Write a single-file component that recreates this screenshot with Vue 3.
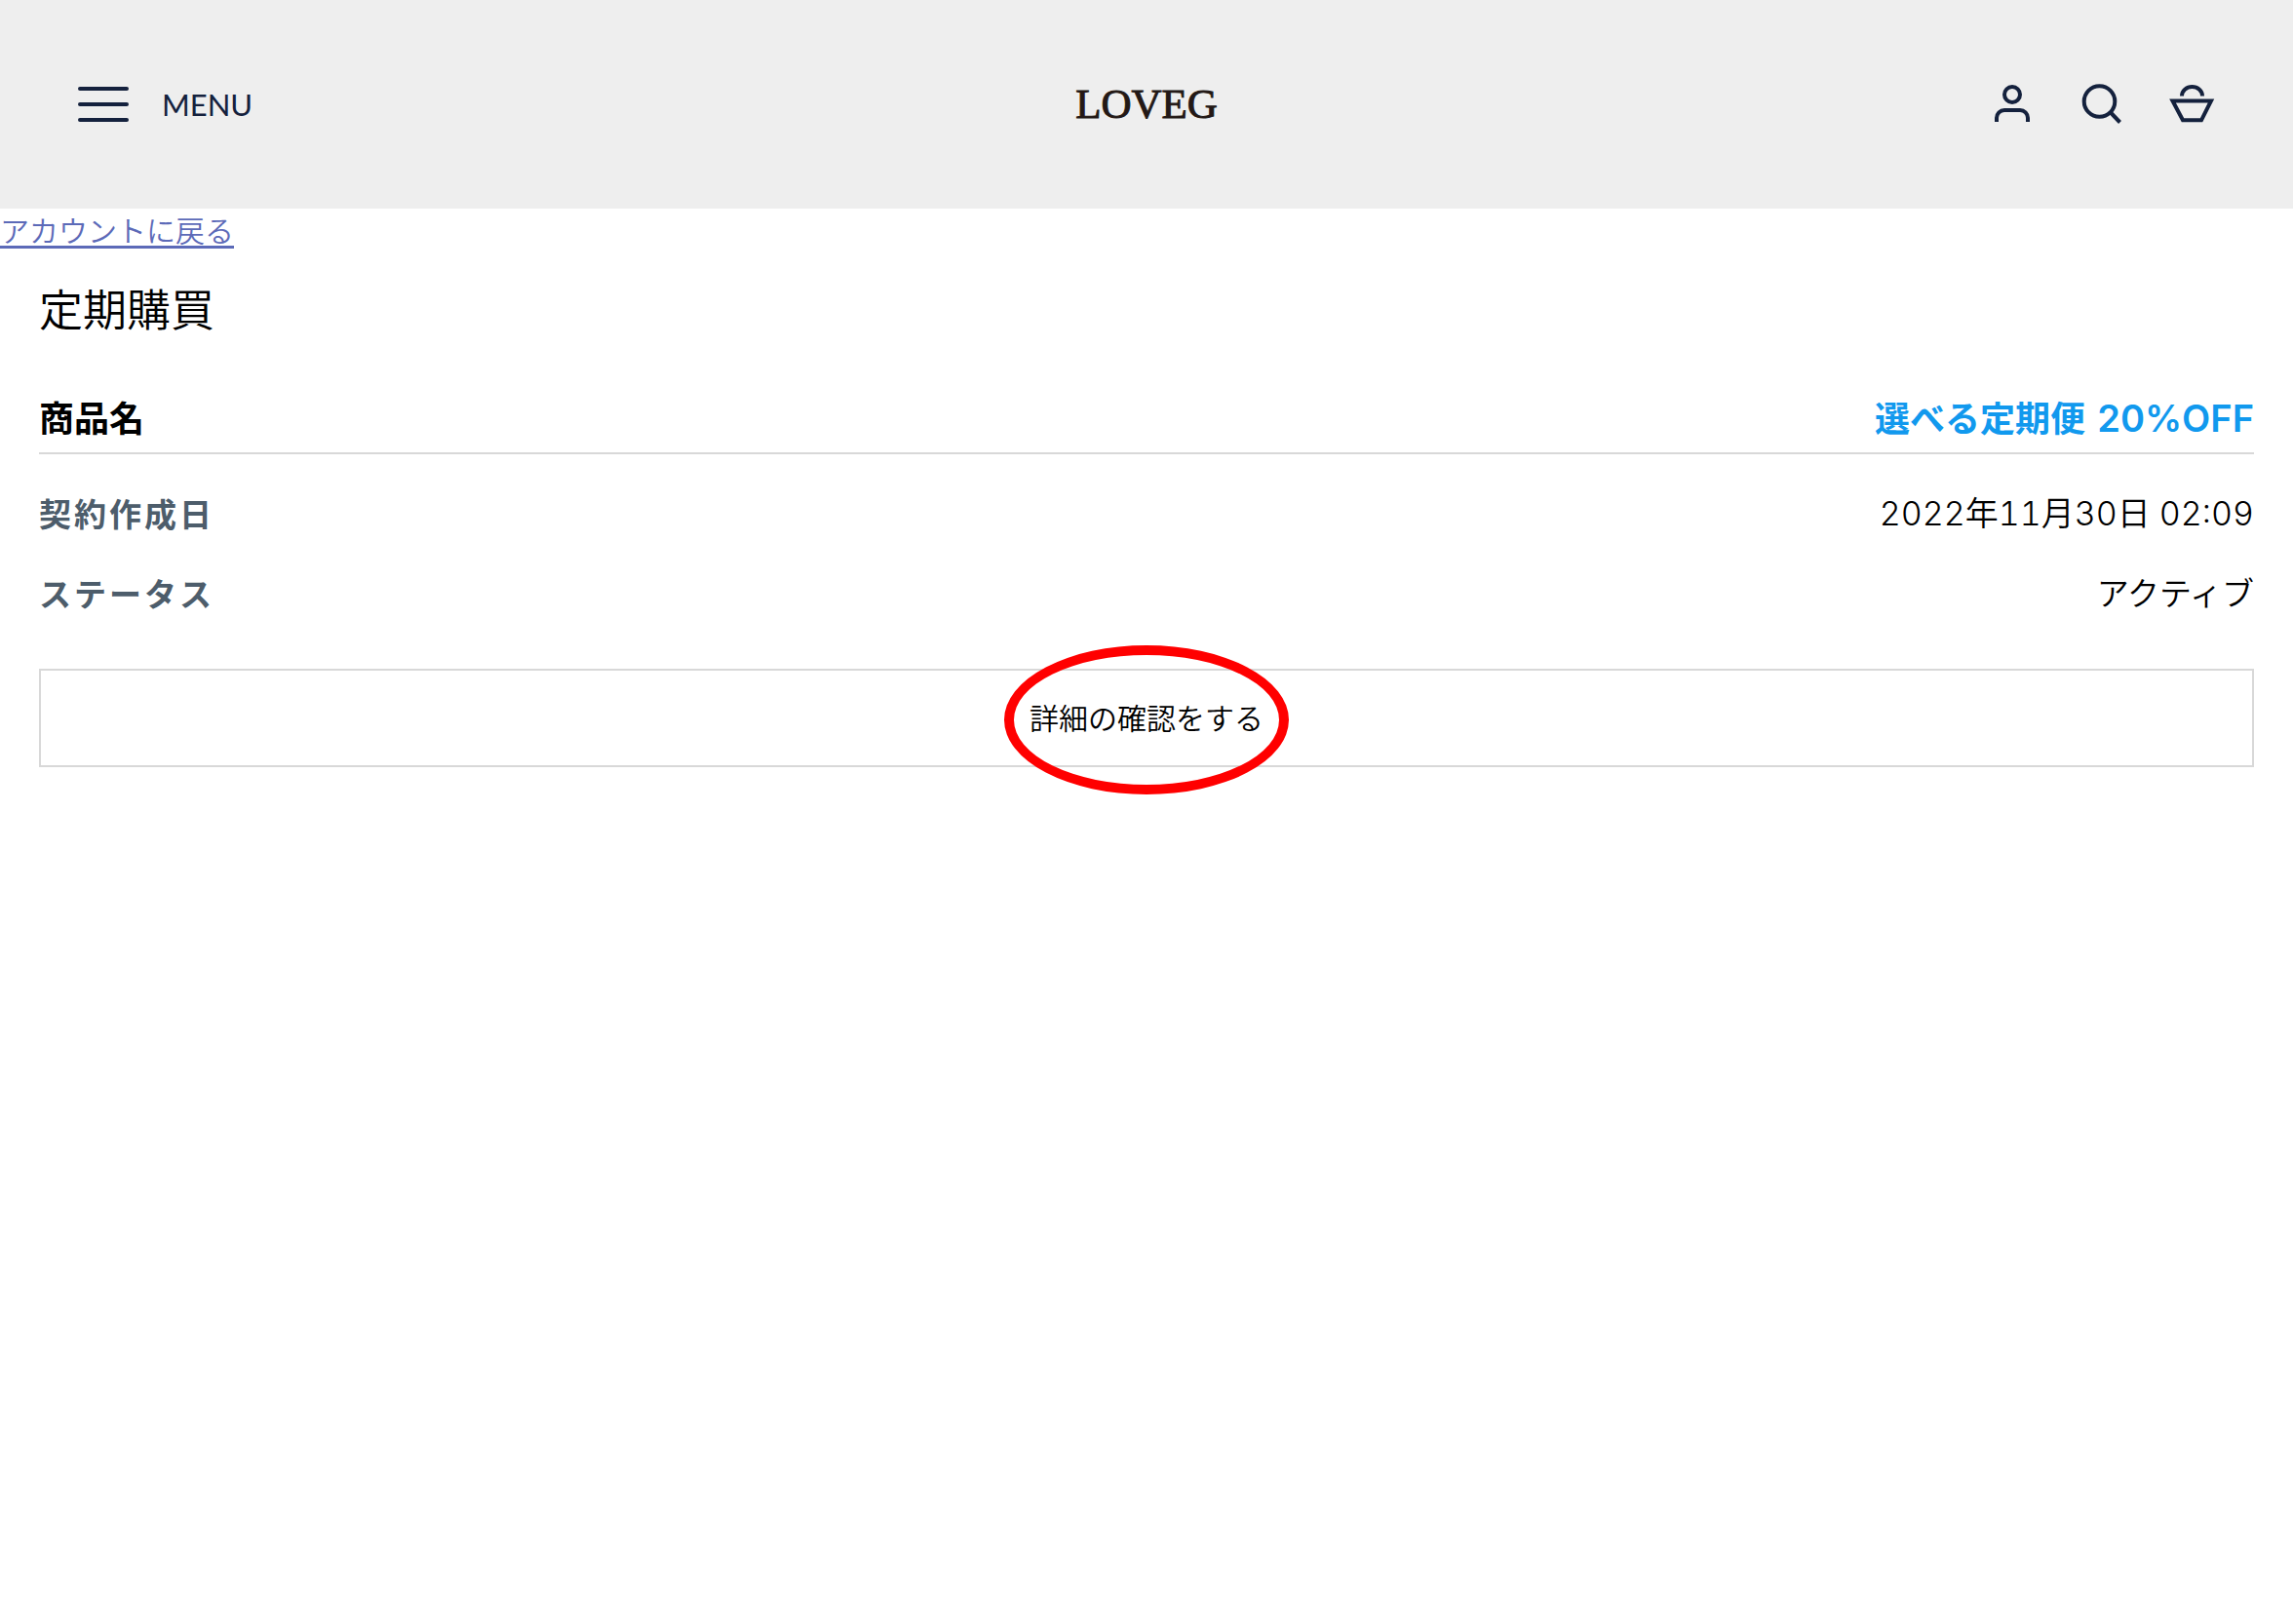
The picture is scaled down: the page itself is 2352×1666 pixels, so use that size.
<script setup>
const contract = {
  plan: '選べる定期便',
  discount: '20%OFF',
  created: '2022年11月30日 02:09',
  status: 'アクティブ',
}
</script>

<template>
  <header class="site-header">
    <button class="menu" type="button">
      <svg width="52" height="36" viewBox="0 0 52 36" aria-hidden="true">
        <path d="M2 2H50M2 18H50M2 34H50" stroke-linecap="round" />
      </svg>
      <span class="menu-label">MENU</span>
    </button>
    <a class="logo" href="#">LOVEG</a>
    <nav class="tools">
      <a href="#" aria-label="アカウント">
        <svg width="48" height="48" viewBox="0 0 48 48">
          <circle cx="24" cy="14" r="8" />
          <path d="M8 42V38A8 8 0 0 1 16 30H32A8 8 0 0 1 40 38V42" />
        </svg>
      </a>
      <a href="#" aria-label="検索">
        <svg width="48" height="48" viewBox="0 0 48 48">
          <circle cx="21.5" cy="21" r="15.8" />
          <path d="M32.5 32L42.5 42.5" />
        </svg>
      </a>
      <a href="#" aria-label="カート">
        <svg width="48" height="48" viewBox="0 0 48 48">
          <path d="M14 15.5A10.5 9.5 0 0 1 35 15.5" />
          <path d="M4.5 20.5H44L34 40.3H15Z" />
        </svg>
      </a>
    </nav>
  </header>

  <div class="back"><a href="#">アカウントに戻る</a></div>

  <main class="content">
    <h1>定期購買</h1>
    <section>
      <div class="plan">
        <h2>商品名</h2>
        <a class="plan-name" href="#">{{ contract.plan }} <span class="discount">{{ contract.discount }}</span></a>
      </div>
      <dl class="details">
        <div class="row">
          <dt>契約作成日</dt>
          <dd><time datetime="2022-11-30T02:09">{{ contract.created }}</time></dd>
        </div>
        <div class="row">
          <dt>ステータス</dt>
          <dd>{{ contract.status }}</dd>
        </div>
      </dl>
      <div class="action">
        <button class="confirm" type="button">詳細の確認をする</button>
        <span class="marker" aria-hidden="true"></span>
      </div>
    </section>
  </main>
</template>

<style>
body {
  margin: 0;
  background: #fff;
  color: #000;
  font-family: "Noto Sans CJK JP", sans-serif;
  font-weight: 350;
}
</style>

<style scoped>
.site-header {
  display: grid;
  grid-template-columns: 1fr auto 1fr;
  align-items: center;
  height: 214px;
  padding: 0 80px;
  background: #eee;
  color: #14213d;
}

svg {
  display: block;
  fill: none;
  stroke: #14213d;
  stroke-width: 4;
}

.menu {
  display: flex;
  align-items: center;
  justify-self: start;
  gap: 34px;
  padding: 0;
  border: 0;
  background: none;
  color: inherit;
}

.menu-label {
  font: 400 31px/40px Lato, sans-serif;
}

.logo {
  color: #231815;
  font: 400 43px/48px "Liberation Serif", serif;
  text-decoration: none;
  -webkit-text-stroke: 1px #231815;
}

.tools {
  display: flex;
  justify-self: end;
  gap: 44px;
}

.back {
  font-size: 30px;
  line-height: 42px;
}

.back a {
  color: #5c6ab8;
  text-decoration-thickness: 3px;
  text-underline-offset: 4px;
}

.content {
  min-height: 600px;
  padding: 24px 40px;
}

h1 {
  margin: 0;
  font-size: 45px;
  font-weight: 350;
  line-height: 72px;
}

.plan {
  display: flex;
  align-items: baseline;
  justify-content: space-between;
  height: 68px;
  margin-top: 44px;
  border-bottom: 2px solid #d8d8d8;
  line-height: 62px;
}

h2 {
  margin: 0;
  font-size: 36px;
  font-weight: 700;
}

.plan-name {
  color: #1199ee;
  font-size: 36px;
  font-weight: 700;
  text-decoration: none;
}

.discount {
  margin-left: 4px;
  font-family: Inter, sans-serif;
  font-size: 38px;
  font-weight: 600;
}

.details {
  margin: 20px 0 36px;
}

.row {
  display: flex;
  justify-content: space-between;
  line-height: 82px;
}

dt {
  color: #4d5d6b;
  font-size: 33px;
  font-weight: 700;
  line-height: 80px;
  letter-spacing: 3px;
}

dd {
  margin: 0;
  font-family: Inter, "Noto Sans CJK JP", sans-serif;
  font-size: 33px;
}

time {
  font-size: 34px;
  font-variant-numeric: tabular-nums;
}

.action {
  position: relative;
}

.confirm {
  display: block;
  width: 100%;
  height: 101px;
  padding: 0 0 4px;
  border: 2px solid #d8d8d8;
  background: #fff;
  color: #000;
  font: inherit;
  font-size: 30px;
}

.marker {
  position: absolute;
  inset: -24px 0 -28px;
  box-sizing: border-box;
  width: 292px;
  margin: 0 auto;
  border: 10px solid #f00;
  border-radius: 50%;
  pointer-events: none;
}
</style>
